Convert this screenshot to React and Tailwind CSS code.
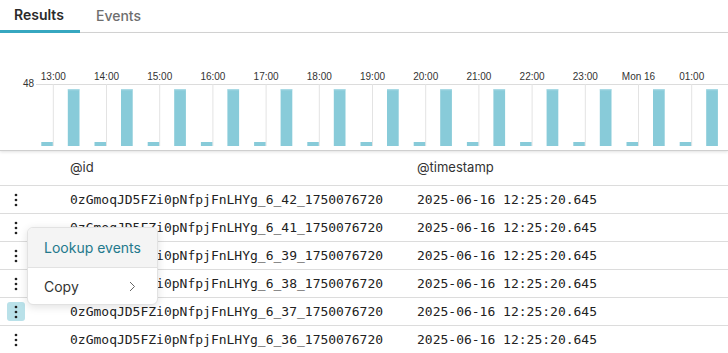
import React from "react";

const labels = ["13:00","14:00","15:00","16:00","17:00","18:00","19:00","20:00","21:00","22:00","23:00","Mon 16","01:00"];
const rows = [42, 41, 39, 38, 37, 36];

function Kebab() {
  return (
    <svg width="4" height="14" viewBox="0 0 4 14">
      <circle cx="2" cy="2" r="1.35" fill="#222" />
      <circle cx="2" cy="7" r="1.35" fill="#222" />
      <circle cx="2" cy="12" r="1.35" fill="#222" />
    </svg>
  );
}

function Chart() {
  const grid = labels.map((_, k) => 53.3 + 53.2 * k);
  return (
    <svg width="728" height="117" viewBox="0 0 728 117" className="block">
      <line x1="36" y1="51.5" x2="728" y2="51.5" stroke="#dcdcdc" strokeWidth="1" />
      <text x="34" y="51" textAnchor="end" dominantBaseline="middle" fontSize="10" fill="#333" fontFamily="'Liberation Sans', Arial, sans-serif">48</text>
      {grid.map((x, k) => (
        <g key={k}>
          <line x1={x} y1="51" x2={x} y2="113" stroke="#e3e3e3" strokeWidth="1" />
          <text x={x} y="44" textAnchor="middle" dominantBaseline="middle" fontSize="10" fill="#333" fontFamily="'Liberation Sans', Arial, sans-serif">{labels[k]}</text>
          <rect x={x - 12} y="109" width="11.5" height="4" fill="#88cbd9" />
          <rect x={x + 14.5} y="56.3" width="11.7" height="56.7" fill="#88cbd9" />
          <rect x={x + 14.5} y="56.3" width="11.7" height="1" fill="#a9dbe5" />
        </g>
      ))}
    </svg>
  );
}

export default function App() {
  return (
    <div className="relative w-[728px] h-[353px] overflow-hidden bg-white font-['Inter',sans-serif] text-[#222]">
      <div className="flex h-[33px] border-b border-[#d6d6d6]">
        <div className="w-[80px] h-[33px] mb-[-1px] border-b-[3px] border-[#36a7c0] flex items-center pl-[14px] pb-[1px] text-[14px] font-semibold text-[#2a2a2a]">
          Results
        </div>
        <div className="h-[32px] flex items-center pl-[16px] pb-[1px] text-[14px] font-medium text-[#6e6e6e]">
          Events
        </div>
      </div>
      <div className="h-[118px] border-b border-[#cfcfcf] shadow-[0_1px_3px_rgba(0,0,0,0.12)]">
        <Chart />
      </div>
      <div className="flex h-[35px] items-center border-b border-[#dcdcdc] text-[13px] text-[#333]">
        <div className="w-[70px]" />
        <div className="w-[347px]">@id</div>
        <div>@timestamp</div>
      </div>
      {rows.map((n, i) => (
        <div key={n} className="flex h-[28px] items-center border-b border-[#dcdcdc] font-['DejaVu_Sans_Mono',monospace] text-[13px] text-[#222]">
          <div className="w-[70px] pl-[7px] flex items-center">
            <div className={`w-[18px] h-[19px] rounded-[3px] flex items-center justify-center ${i === 4 ? "bg-[#b9e1e9]" : ""}`}>
              <Kebab />
            </div>
          </div>
          <div className="w-[347px]">0zGmoqJD5FZi0pNfpjFnLHYg_6_{n}_1750076720</div>
          <div>2025-06-16 12:25:20.645</div>
        </div>
      ))}
      <div className="absolute left-[27px] top-[227px] w-[131px] rounded-[6px] border border-[#e2e2e2] bg-white shadow-[0_2px_8px_rgba(0,0,0,0.12)] overflow-hidden text-[14px]">
        <div className="h-[39px] bg-[#f4f4f4] flex items-center pl-[16px] text-[#23798c]">Lookup events</div>
        <div className="h-px bg-[#e2e2e2]" />
        <div className="h-[36px] flex items-center justify-between pl-[16px] pr-[21px] text-[#333]">
          <span>Copy</span>
          <svg width="7" height="11" viewBox="0 0 7 11">
            <path d="M1 1 L5.5 5.5 L1 10" stroke="#666" strokeWidth="1" fill="none" />
          </svg>
        </div>
      </div>
    </div>
  );
}
